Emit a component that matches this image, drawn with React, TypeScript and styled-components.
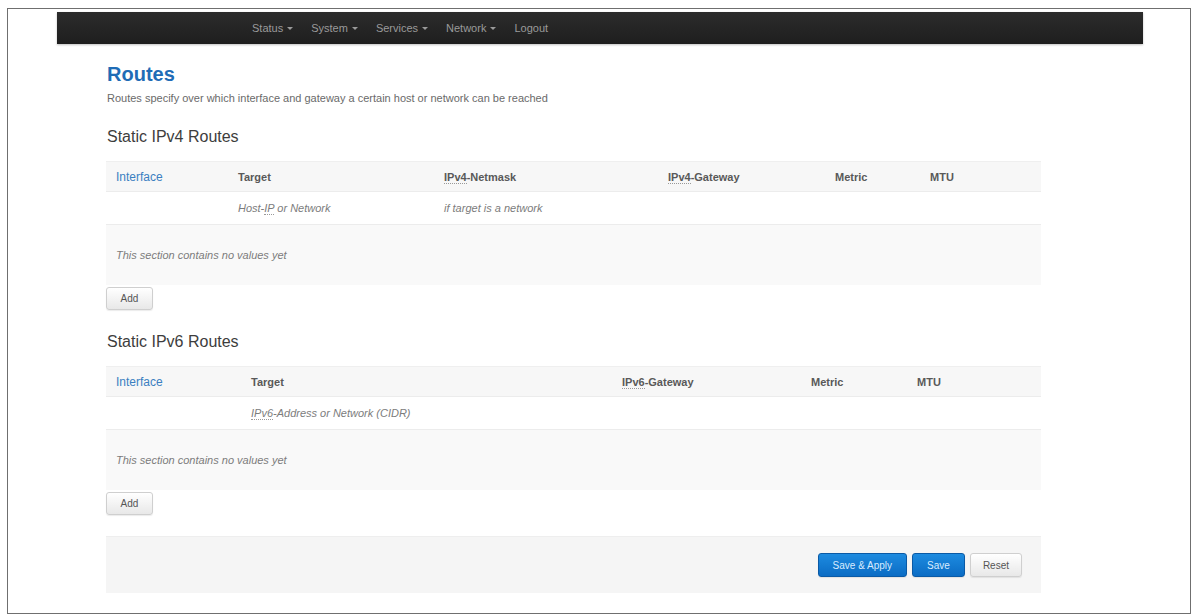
import styled, { createGlobalStyle } from "styled-components";

const GlobalStyle = createGlobalStyle`
  html, body {
    margin: 0;
    padding: 0;
    background: #ffffff;
    font-family: "Liberation Sans", Arial, sans-serif;
  }
`;

const Frame = styled.div`
  box-sizing: border-box;
  margin: 8px 0 0 7px;
  width: 1184px;
  height: 606px;
  border: 1px solid #6f6f6f;
  background: #fff;
  overflow: hidden;
`;

const NavBar = styled.nav`
  margin: 3px 47px 0 49px;
  height: 32px;
  background: linear-gradient(#2c2c2c, #1e1e1e);
  box-shadow: 0 1px 2px rgba(0, 0, 0, 0.25);
  display: flex;
  align-items: center;
  padding-left: 195px;
  gap: 18px;
`;

const NavItem = styled.span`
  color: #9a9a9a;
  font-size: 11px;
  display: flex;
  align-items: center;
  gap: 4px;
`;

const Caret = styled.span`
  width: 0;
  height: 0;
  border-left: 3px solid transparent;
  border-right: 3px solid transparent;
  border-top: 3px solid #9a9a9a;
`;

const Content = styled.main`
  width: 935px;
  margin-left: 98px;
  display: flex;
  flex-direction: column;
`;

const Title = styled.h2`
  margin: 18px 0 0 1px;
  font-size: 20px;
  line-height: 24px;
  font-weight: bold;
  color: #1f6cb6;
`;

const Description = styled.p`
  margin: 5px 0 0 1px;
  font-size: 11px;
  line-height: 14px;
  color: #6a6a6a;
`;

const SectionTitle = styled.h3<{ $top: number }>`
  margin: ${(p) => p.$top}px 0 0 1px;
  font-size: 16px;
  line-height: 20px;
  font-weight: normal;
  color: #3d3d3d;
`;

const Table = styled.div<{ $cols: string }>`
  margin-top: 14px;
  display: grid;
  grid-template-columns: ${(p) => p.$cols};
`;

const HeadCell = styled.div<{ $link?: boolean }>`
  height: 29px;
  display: flex;
  align-items: center;
  padding-left: 10px;
  background: #f7f7f7;
  border-top: 1px solid #efefef;
  border-bottom: 1px solid #ececec;
  font-size: ${(p) => (p.$link ? 12 : 11)}px;
  font-weight: ${(p) => (p.$link ? "normal" : "bold")};
  color: ${(p) => (p.$link ? "#3b7fc1" : "#595959")};
`;

const Cell = styled.div`
  height: 32px;
  display: flex;
  align-items: center;
  padding-left: 10px;
  background: #fff;
  border-bottom: 1px solid #ececec;
  font-size: 11px;
  font-style: italic;
  color: #7c7c7c;
`;

const Abbr = styled.abbr`
  text-decoration: none;
  border-bottom: 1px dotted #999;
`;

const EmptyRow = styled.div`
  grid-column: 1 / -1;
  height: 60px;
  display: flex;
  align-items: center;
  padding-left: 10px;
  background: #f9f9f9;
  font-size: 11px;
  font-style: italic;
  color: #7c7c7c;
`;

const Button = styled.button<{ $primary?: boolean }>`
  box-sizing: border-box;
  height: 24px;
  padding: 0 ${(p) => (p.$primary ? 14 : 12)}px;
  font-family: "Liberation Sans", Arial, sans-serif;
  font-size: 10px;
  border-radius: 3px;
  cursor: pointer;
  color: ${(p) => (p.$primary ? "#d8ecff" : "#555")};
  background: ${(p) =>
    p.$primary
      ? "linear-gradient(#1d8be0, #0b6cc4)"
      : "linear-gradient(#ffffff, #e8e8e8)"};
  border: 1px solid ${(p) => (p.$primary ? "#0a5aa6" : "#cfcfcf")};
  box-shadow: 0 1px 1px rgba(0, 0, 0, 0.08);
`;

const AddButton = styled(Button)`
  align-self: flex-start;
  margin-top: 2px;
  width: 47px;
  height: 23px;
  padding: 0;
`;

const Actions = styled.div`
  margin-top: 21px;
  height: 56px;
  background: #f5f5f5;
  border-top: 1px solid #eeeeee;
  display: flex;
  align-items: center;
  justify-content: flex-end;
  gap: 5px;
  padding-right: 19px;
`;

type Col = { label: React.ReactNode; key: string; hint?: React.ReactNode; link?: boolean };

function RouteTable({ cols, widths }: { cols: Col[]; widths: string }) {
  return (
    <Table $cols={widths}>
      {cols.map((c) => (
        <HeadCell key={c.key} $link={c.link}>
          <span>{c.label}</span>
        </HeadCell>
      ))}
      {cols.map((c) => (
        <Cell key={c.key}>
          <span>{c.hint ?? ""}</span>
        </Cell>
      ))}
      <EmptyRow>This section contains no values yet</EmptyRow>
    </Table>
  );
}

const ipv4: Col[] = [
  { key: "iface", label: "Interface", link: true },
  {
    key: "target",
    label: "Target",
    hint: (
      <>
        Host-<Abbr>IP</Abbr> or Network
      </>
    ),
  },
  {
    key: "mask",
    label: (
      <>
        <Abbr>IPv4</Abbr>-Netmask
      </>
    ),
    hint: "if target is a network",
  },
  {
    key: "gw",
    label: (
      <>
        <Abbr>IPv4</Abbr>-Gateway
      </>
    ),
  },
  { key: "metric", label: "Metric" },
  { key: "mtu", label: "MTU" },
];

const ipv6: Col[] = [
  { key: "iface", label: "Interface", link: true },
  {
    key: "target",
    label: "Target",
    hint: (
      <>
        <Abbr>IPv6</Abbr>-Address or Network (CIDR)
      </>
    ),
  },
  {
    key: "gw",
    label: (
      <>
        <Abbr>IPv6</Abbr>-Gateway
      </>
    ),
  },
  { key: "metric", label: "Metric" },
  { key: "mtu", label: "MTU" },
];

export default function App() {
  return (
    <>
      <GlobalStyle />
      <Frame>
        <NavBar>
          {["Status", "System", "Services", "Network"].map((n) => (
            <NavItem key={n}>
              {n} <Caret />
            </NavItem>
          ))}
          <NavItem>Logout</NavItem>
        </NavBar>

        <Content>
          <Title>Routes</Title>
          <Description>
            Routes specify over which interface and gateway a certain host or
            network can be reached
          </Description>

          <SectionTitle $top={22}>Static IPv4 Routes</SectionTitle>
          <RouteTable cols={ipv4} widths="122px 206px 224px 167px 95px 1fr" />
          <AddButton>Add</AddButton>

          <SectionTitle $top={22}>Static IPv6 Routes</SectionTitle>
          <RouteTable cols={ipv6} widths="135px 371px 189px 106px 1fr" />
          <AddButton>Add</AddButton>

          <Actions>
            <Button $primary>Save &amp; Apply</Button>
            <Button $primary>Save</Button>
            <Button>Reset</Button>
          </Actions>
        </Content>
      </Frame>
    </>
  );
}
